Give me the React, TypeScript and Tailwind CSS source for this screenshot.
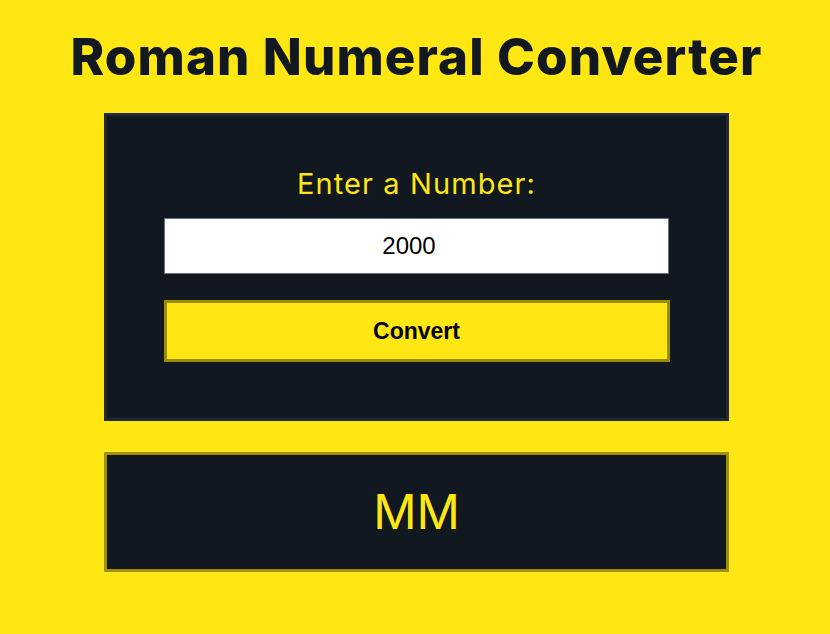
const App = () => {
  return (
    <div className="min-h-[634px] w-full bg-[#ffe714] flex flex-col items-center pt-[22px] pl-[3px] font-['Inter',sans-serif]">
      <h1 className="text-[51px] leading-[70px] font-extrabold text-[#121820] tracking-[1.1px]">
        Roman Numeral Converter
      </h1>
      <div className="mt-[21px] w-[625px] h-[308px] border-[3px] border-[#1f2937] bg-[#121820] flex flex-col items-center pt-[50px]">
        <label className="text-[29px] leading-[36px] text-[#ffe714] tracking-[1.1px]">Enter a Number:</label>
        <input
          type="number"
          defaultValue={2000}
          className="mt-[16px] w-[505px] h-[56px] bg-white border border-gray-500 text-center text-[24px] text-black font-['Liberation_Sans',sans-serif] outline-none"
        />
        <button className="mt-[26px] w-[506px] h-[62px] bg-[#ffe714] border-[3px] border-[#9c8c00] text-[23px] font-bold text-black font-['Liberation_Sans',sans-serif]">
          Convert
        </button>
      </div>
      <div className="mt-[31px] w-[625px] h-[120px] border-[3px] border-[#a08f00] bg-[#121820] flex items-center justify-center">
        <span className="text-[48px] text-[#ffe714]">MM</span>
      </div>
    </div>
  );
};

export default App;
